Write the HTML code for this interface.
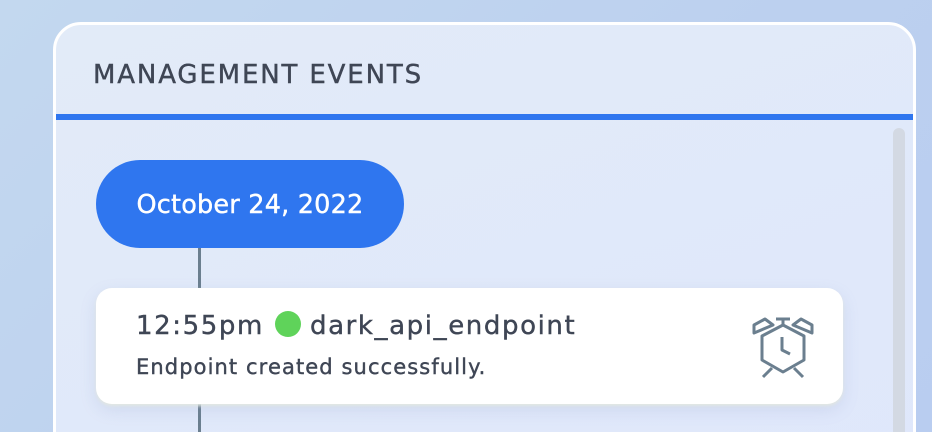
<!DOCTYPE html>
<html><head><style>
html,body{margin:0;width:932px;height:432px;overflow:hidden;font-family:"DejaVu Sans","Liberation Sans",sans-serif;}
body{background:linear-gradient(135deg,#c3d8ef 0%,#bcd0ef 60%,#b9cdf0 100%);position:relative;}
.panel{position:absolute;left:53px;top:22px;width:857px;height:460px;border:3px solid #fff;border-radius:28px;background:linear-gradient(160deg,#e2ebf8,#dfe7fb);overflow:hidden;}
.hdr{position:absolute;left:37px;top:35px;font-size:26px;color:#3f4655;letter-spacing:1.85px;-webkit-text-stroke:0.4px #3f4655;}
.bar{position:absolute;left:0;top:89px;width:100%;height:6px;background:#2f76ef;}
.scroll{position:absolute;left:837px;top:103px;width:12px;height:400px;background:#d3d9e3;border-radius:6px;}
.line{position:absolute;left:142px;width:3px;background:#6b7f8f;}
.pill{position:absolute;left:40px;top:135px;width:308px;height:88px;border-radius:44px;background:#2f76ef;color:#fff;font-size:25.5px;display:flex;align-items:center;justify-content:center;-webkit-text-stroke:0.4px #fff;letter-spacing:0.2px;padding-top:2px;box-sizing:border-box;}
.card{position:absolute;left:40px;top:263px;width:747px;height:116px;border-radius:16px;background:#fff;box-shadow:0 2px 3px #e3e8e3,0 6px 16px rgba(120,140,190,.18);}
.t{position:absolute;left:40px;top:23px;font-size:26px;color:#3f4655;white-space:nowrap;letter-spacing:1.6px;-webkit-text-stroke:0.4px #3f4655;}
.dot{display:inline-block;width:26px;height:26px;border-radius:50%;background:#5fd35a;vertical-align:-3px;margin:0 9px 0 11px;}
.s{position:absolute;left:40px;top:67px;font-size:21px;color:#3f4655;letter-spacing:1.1px;-webkit-text-stroke:0.4px #3f4655;}
</style></head><body>
<div class="panel">
<div class="hdr">MANAGEMENT EVENTS</div>
<div class="bar"></div>
<div class="scroll"></div>
<div class="line" style="top:220px;height:45px"></div>
<div class="line" style="top:378px;height:60px"></div>
<div class="pill">October 24, 2022</div>
<div class="card">
<div class="t">12:55pm<span class="dot"></span>dark_api_endpoint</div>
<div class="s">Endpoint created successfully.</div>
</div>
</div>
<svg style="position:absolute;left:0;top:0" width="932" height="432" viewBox="0 0 932 432" fill="none" stroke="#6b7f8f" stroke-width="3" stroke-linejoin="round">
<polygon points="783,325 804,336 804,360 783,372 762,360 762,336"/>
<path d="M782,337V350L790,354"/>
<path d="M754,333L754,325L765,319L773,325Z"/>
<path d="M812,333L812,325L801,319L793,325Z"/>
<path d="M776,319H790M783,319V325"/>
<path d="M763,377L772,368M803,377L794,368"/>
</svg>
</body></html>
